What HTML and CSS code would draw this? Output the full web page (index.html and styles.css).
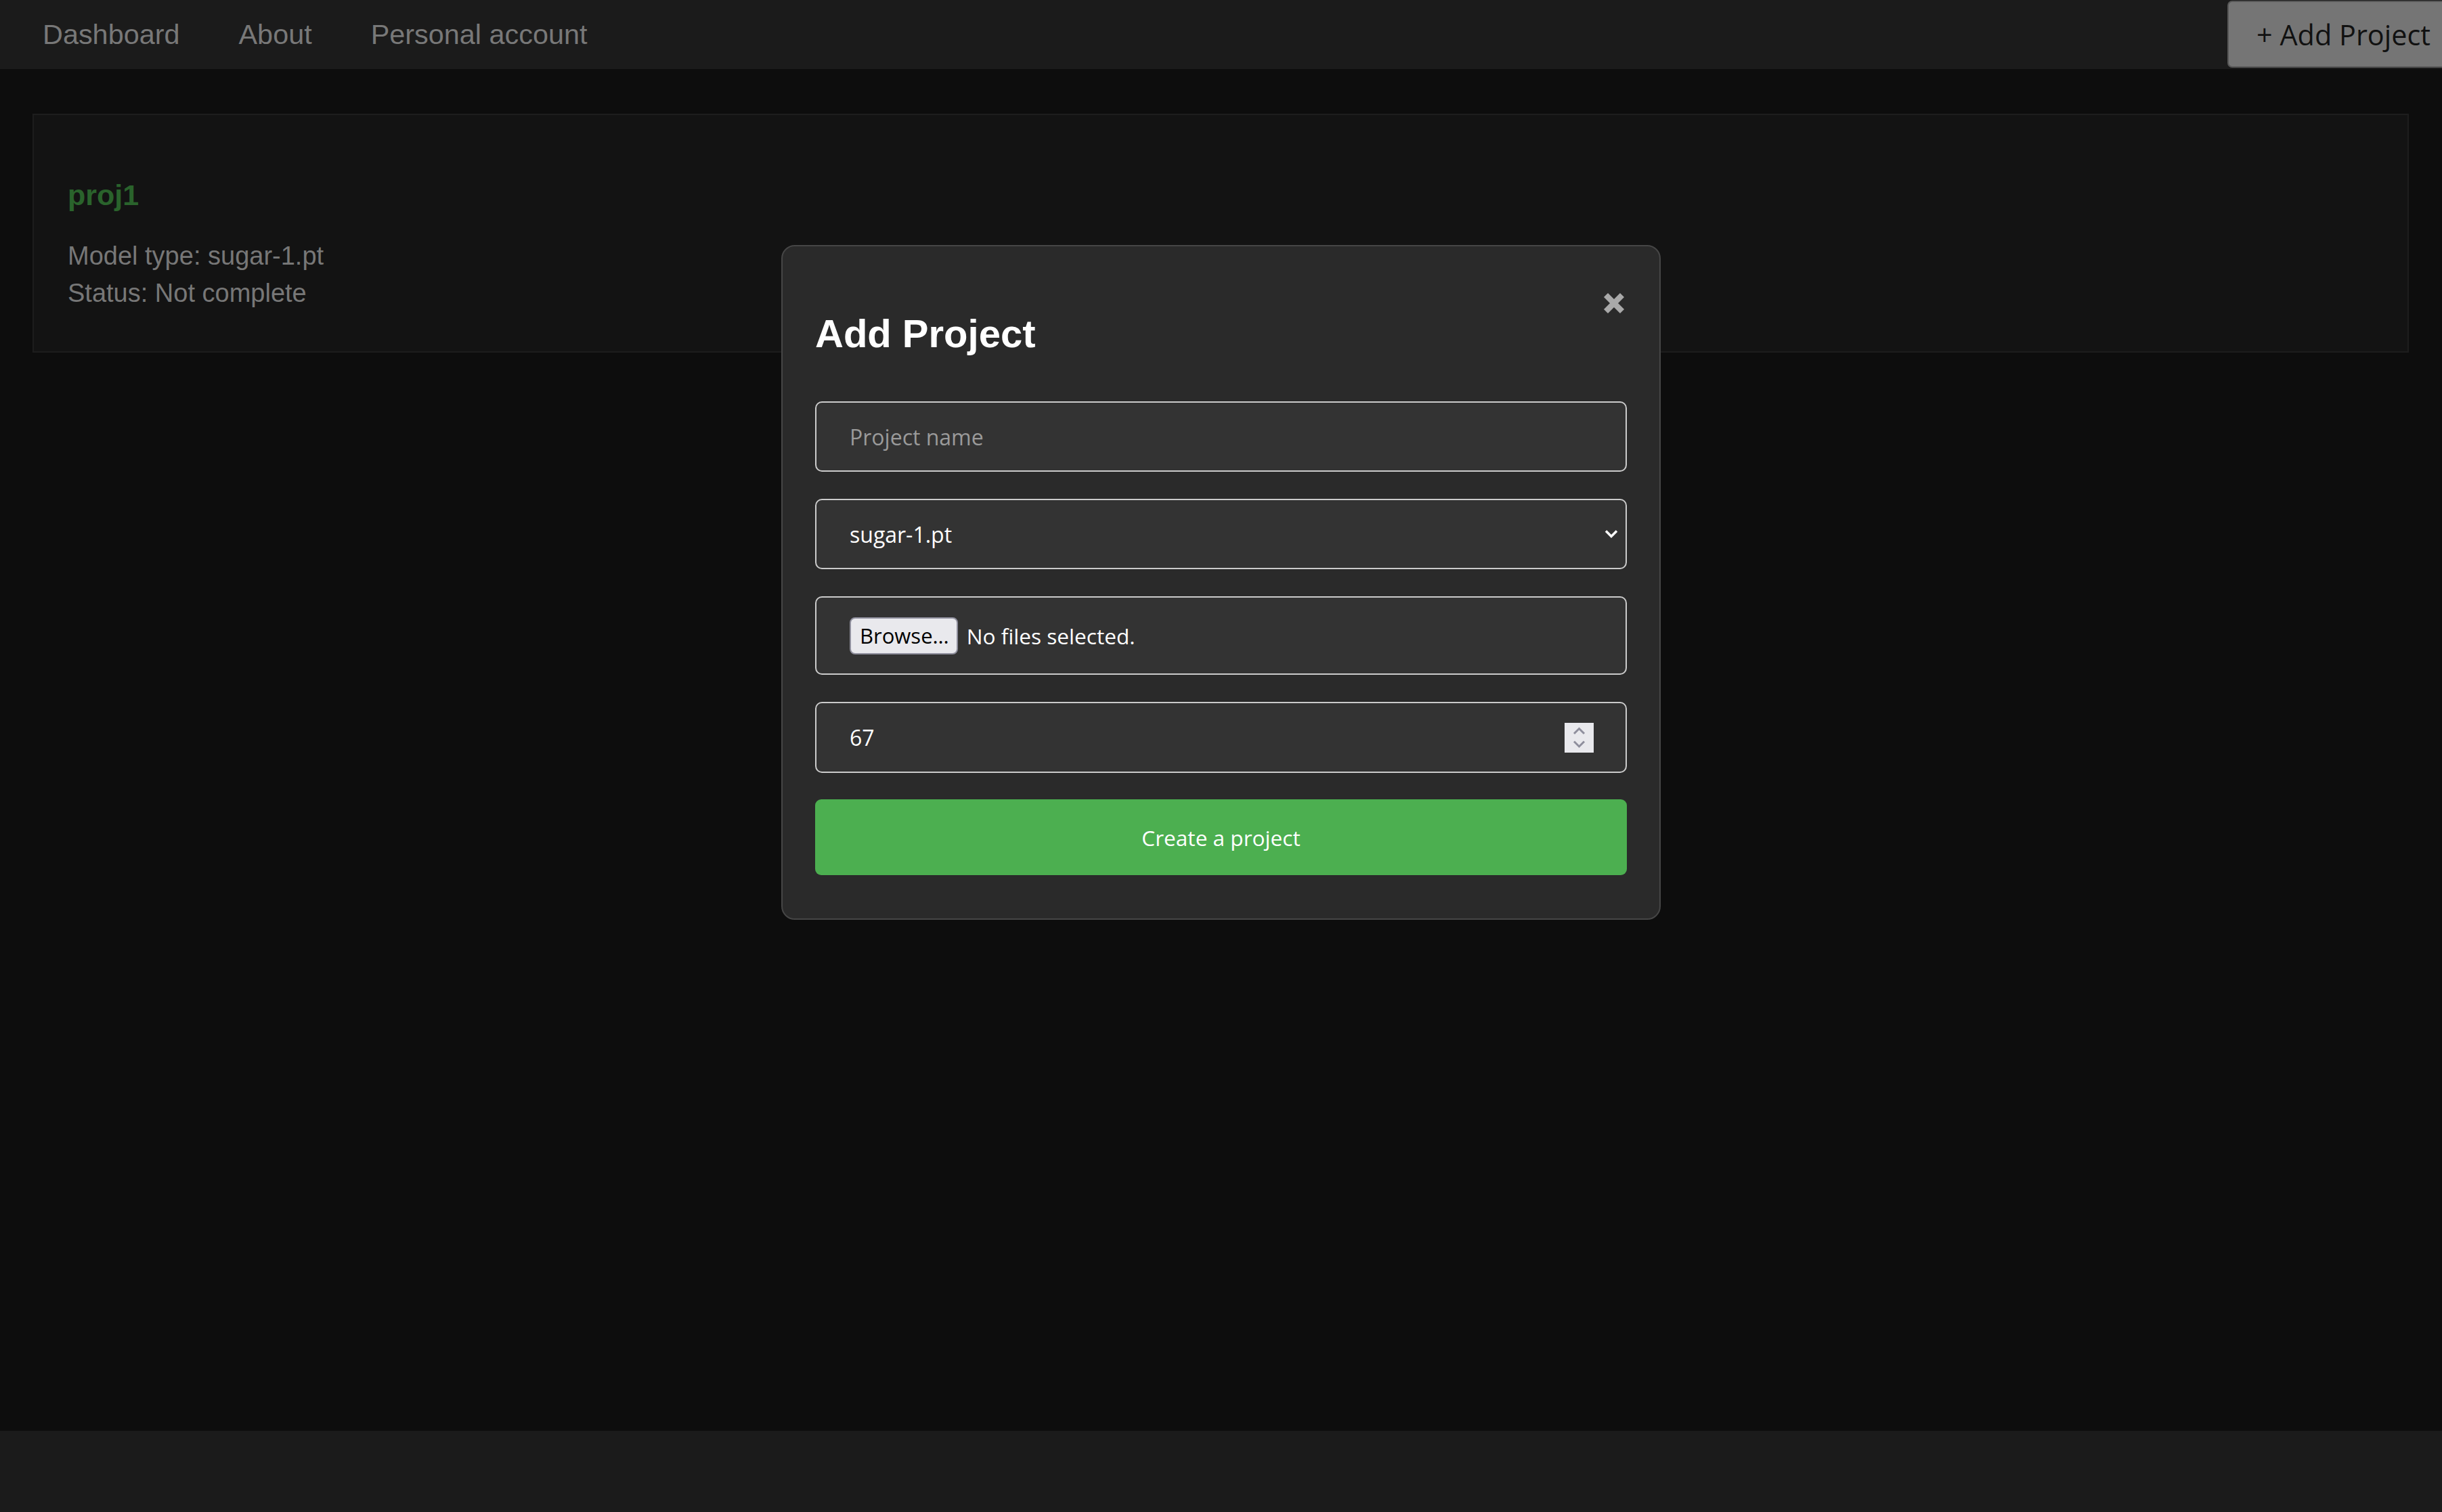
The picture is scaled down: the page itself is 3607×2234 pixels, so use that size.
FILE: index.html
```html
<!DOCTYPE html>
<html lang="en">
<head>
<meta charset="utf-8">
<title>Projects</title>
<link rel="stylesheet" href="styles.css">
</head>
<body>
  <nav class="topbar">
    <a class="nav-link" href="#">Dashboard</a>
    <a class="nav-link" href="#">About</a>
    <a class="nav-link" href="#">Personal account</a>
    <button class="add-btn" type="button">+ Add Project</button>
  </nav>

  <main class="content">
    <section class="card">
      <h3 class="card-title">proj1</h3>
      <p class="card-line">Model type: sugar-1.pt</p>
      <p class="card-line">Status: Not complete</p>
    </section>
  </main>

  <footer class="footer"></footer>

  <div class="overlay">
    <div class="modal">
      <button class="close-btn" type="button" aria-label="Close">
        <svg width="32" height="32" viewBox="0 0 32 32"><path d="M4 4 L28 28 M28 4 L4 28" stroke="#a9a9a9" stroke-width="8.5" fill="none"/></svg>
      </button>
      <h2 class="modal-title">Add Project</h2>
      <form class="form">
        <input class="field field-input" type="text" placeholder="Project name">
        <div class="field field-select">
          <span>sugar-1.pt</span>
          <svg width="20" height="14" viewBox="0 0 20 14"><path d="M2 2.5 L10 10.5 L18 2.5" stroke="#ffffff" stroke-width="3.5" fill="none"/></svg>
        </div>
        <div class="field field-file">
          <span class="browse-btn">Browse…</span>
          <span class="file-status">No files selected.</span>
        </div>
        <div class="field field-number">
          <span>67</span>
          <span class="spinner">
            <svg width="43" height="44" viewBox="0 0 43 44"><path d="M14 16 L21.5 8.5 L29 16 M14 27.5 L21.5 35 L29 27.5" stroke="#8f8f9d" stroke-width="3" fill="none"/></svg>
          </span>
        </div>
        <button class="create-btn" type="button">Create a project</button>
      </form>
    </div>
  </div>
</body>
</html>
```

FILE: styles.css
```css
html, body {
  margin: 0;
  padding: 0;
}

body {
  background: #0d0d0d;
  min-height: 100vh;
  display: flex;
  flex-direction: column;
  font-family: "Liberation Sans", Arial, sans-serif;
}

.topbar {
  height: 102px;
  background: #1b1b1b;
  display: flex;
  align-items: center;
  padding-left: 63px;
  gap: 87px;
  overflow: hidden;
  flex: none;
}

.nav-link {
  color: #787878;
  text-decoration: none;
  font-size: 41.4px;
  line-height: 48px;
}

.add-btn {
  margin-left: auto;
  margin-right: -26px;
  align-self: flex-start;
  margin-top: 1px;
  height: 99px;
  box-sizing: border-box;
  background: #757575;
  border: 2px solid #575757;
  border-radius: 7px;
  padding: 0 41px;
  font-family: "Open Sans", "Noto Sans", sans-serif;
  font-size: 41.4px;
  color: #111111;
  white-space: nowrap;
}

.content {
  flex: 1;
  padding: 66px 49px 0 48px;
}

.card {
  background: #131313;
  border: 2px solid #1d1d1d;
  padding: 94px 50px 58px;
}

.card-title {
  margin: 0 0 38px;
  font-size: 43px;
  line-height: 49px;
  font-weight: bold;
  color: #2a632c;
}

.card-line {
  margin: 0;
  font-size: 38px;
  line-height: 55px;
  color: #777777;
}

.footer {
  height: 120px;
  background: #1b1b1b;
  flex: none;
}

.overlay {
  position: fixed;
  inset: 0;
  display: flex;
  justify-content: center;
  align-items: flex-start;
  padding-top: 362px;
}

.modal {
  position: relative;
  width: 1299px;
  box-sizing: border-box;
  background: #2a2a2a;
  border: 2px solid #464646;
  border-radius: 20px;
  padding: 48px 48px 64px;
}

.close-btn {
  position: absolute;
  top: 68px;
  right: 51px;
  width: 32px;
  height: 32px;
  padding: 0;
  border: none;
  background: transparent;
  display: block;
}

.close-btn svg {
  display: block;
}

.modal-title {
  margin: 47px 0 67px;
  font-size: 58px;
  line-height: 67px;
  font-weight: bold;
  color: #ffffff;
}

.form {
  display: flex;
  flex-direction: column;
  gap: 40px;
  margin: 0;
}

.field {
  box-sizing: border-box;
  height: 104px;
  width: 100%;
  background: #333333;
  border: 2px solid #cbcbcb;
  border-radius: 10px;
  padding: 0 49px;
  font-family: "Open Sans", "Noto Sans", sans-serif;
  font-size: 32px;
  color: #ffffff;
  display: flex;
  align-items: center;
  margin: 0;
}

.field-input {
  outline: none;
}

.field-input::placeholder {
  color: #9a9a9a;
  opacity: 1;
}

.field-select {
  justify-content: space-between;
  padding-right: 11px;
}

.field-select svg {
  display: block;
}

.field-file {
  height: 116px;
  gap: 13px;
}

.browse-btn {
  box-sizing: border-box;
  height: 55px;
  display: flex;
  align-items: center;
  padding: 0 11px 0 13px;
  background: #e9e9ed;
  border: 2px solid #8f8f9d;
  border-radius: 8px;
  color: #000000;
  font-size: 31px;
}

.file-status {
  font-size: 31.6px;
}

.field-number {
  height: 105px;
  justify-content: space-between;
  padding-right: 47px;
}

.spinner {
  width: 43px;
  height: 44px;
  background: #e9e9ed;
  display: block;
}

.spinner svg {
  display: block;
}

.create-btn {
  height: 112px;
  width: 100%;
  border: none;
  border-radius: 9px;
  background: #4caf50;
  color: #ffffff;
  font-family: "Open Sans", "Noto Sans", sans-serif;
  font-size: 31.6px;
  margin-top: -1px;
}
```
